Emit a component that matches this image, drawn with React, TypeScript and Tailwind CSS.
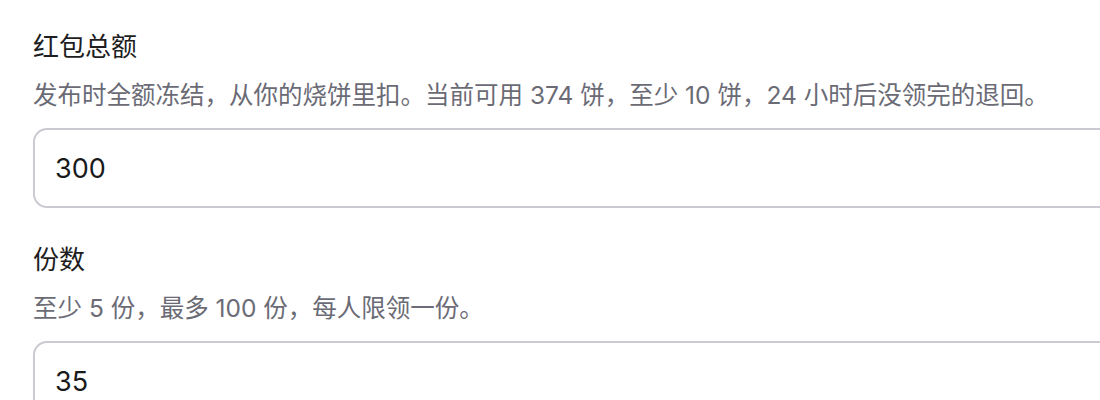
import React from 'react';

const fields = [
  {
    id: 'amount',
    label: '红包总额',
    hint: '发布时全额冻结，从你的烧饼里扣。当前可用 374 饼，至少 10 饼，24 小时后没领完的退回。',
    value: '300',
  },
  {
    id: 'count',
    label: '份数',
    hint: '至少 5 份，最多 100 份，每人限领一份。',
    value: '35',
  },
];

export default function App() {
  return (
    <div
      className="w-[1100px] h-[400px] overflow-hidden bg-white pt-[29px] pl-[33px]"
      style={{ fontFamily: '"Inter", "Noto Sans CJK SC", sans-serif' }}
    >
      <div className="flex flex-col gap-[34px] w-[1120px]">
        {fields.map((f) => (
          <div key={f.id} className="flex flex-col">
            <label className="text-[26px] leading-[36px] text-[#1d1d22]">{f.label}</label>
            <p className="mt-[12px] text-[24.5px] leading-[36px] text-[#6b6b76]">{f.hint}</p>
            <input
              className="mt-[15px] h-[80px] w-full rounded-[14px] border-2 border-[#cacad2] bg-white px-[20px] text-[27px] text-[#1a1a1a] outline-none"
              defaultValue={f.value}
            />
          </div>
        ))}
      </div>
    </div>
  );
}
